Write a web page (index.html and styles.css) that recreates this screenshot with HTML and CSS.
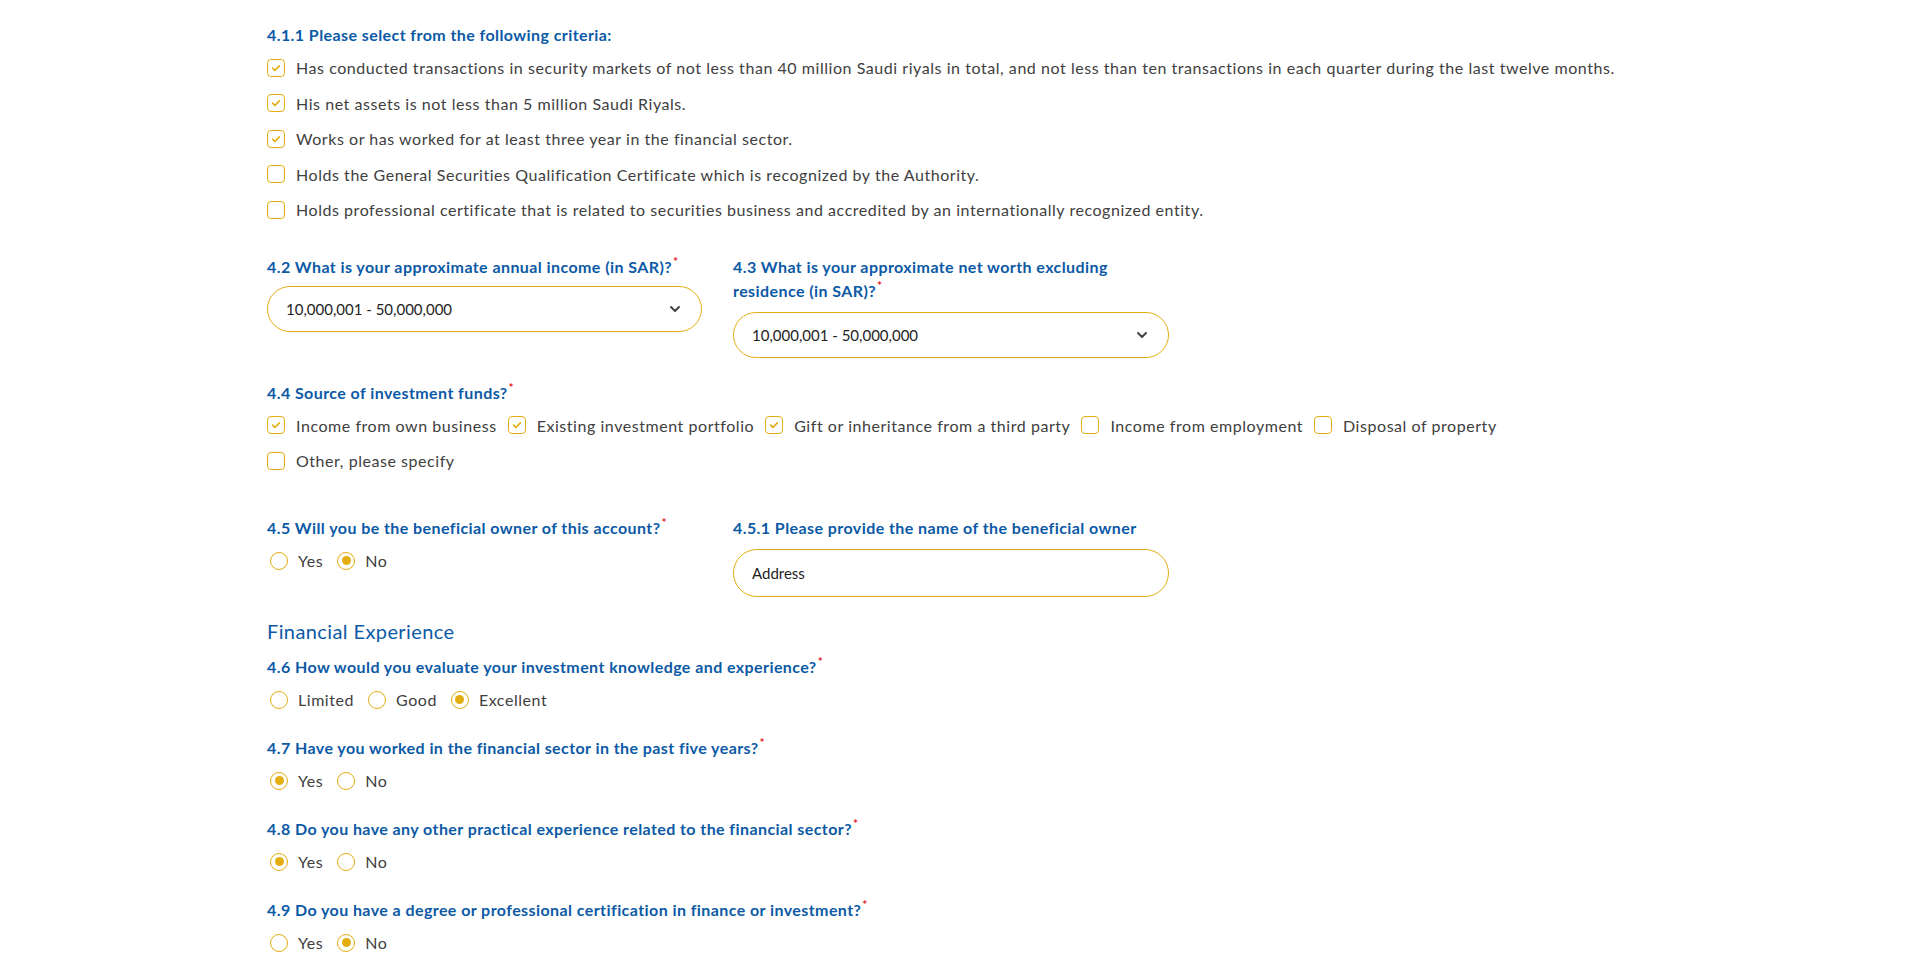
FILE: index.html
```html
<!DOCTYPE html>
<html lang="en">
<head>
<meta charset="utf-8">
<title>Investor Profile</title>
<link rel="stylesheet" href="styles.css">
</head>
<body>
<main class="form">
  <section class="criteria">
    <h3 class="q">4.1.1 Please select from the following criteria:</h3>
    <label class="opt row"><span class="cb on"><svg viewBox="0 0 18 18"><path d="M5.2 9.2l2.6 2.6 5-5.2"/></svg></span>Has conducted transactions in security markets of not less than 40 million Saudi riyals in total, and not less than ten transactions in each quarter during the last twelve months.</label>
    <label class="opt row"><span class="cb on"><svg viewBox="0 0 18 18"><path d="M5.2 9.2l2.6 2.6 5-5.2"/></svg></span>His net assets is not less than 5 million Saudi Riyals.</label>
    <label class="opt row"><span class="cb on"><svg viewBox="0 0 18 18"><path d="M5.2 9.2l2.6 2.6 5-5.2"/></svg></span>Works or has worked for at least three year in the financial sector.</label>
    <label class="opt row"><span class="cb"></span>Holds the General Securities Qualification Certificate which is recognized by the Authority.</label>
    <label class="opt row"><span class="cb"></span>Holds professional certificate that is related to securities business and accredited by an internationally recognized entity.</label>
  </section>

  <section class="pair selects">
    <div class="field">
      <h3 class="q">4.2 What is your approximate annual income (in SAR)?<sup>*</sup></h3>
      <div class="control select"><span>10,000,001 - 50,000,000</span><svg class="chev" viewBox="0 0 12 8"><path d="M2 2l4 4 4-4"/></svg></div>
    </div>
    <div class="field">
      <h3 class="q">4.3 What is your approximate net worth excluding<br>residence (in SAR)?<sup>*</sup></h3>
      <div class="control select"><span>10,000,001 - 50,000,000</span><svg class="chev" viewBox="0 0 12 8"><path d="M2 2l4 4 4-4"/></svg></div>
    </div>
  </section>

  <section class="funds">
    <h3 class="q">4.4 Source of investment funds?<sup>*</sup></h3>
    <div class="inline">
      <label class="opt"><span class="cb on"><svg viewBox="0 0 18 18"><path d="M5.2 9.2l2.6 2.6 5-5.2"/></svg></span>Income from own business</label>
      <label class="opt"><span class="cb on"><svg viewBox="0 0 18 18"><path d="M5.2 9.2l2.6 2.6 5-5.2"/></svg></span>Existing investment portfolio</label>
      <label class="opt"><span class="cb on"><svg viewBox="0 0 18 18"><path d="M5.2 9.2l2.6 2.6 5-5.2"/></svg></span>Gift or inheritance from a third party</label>
      <label class="opt"><span class="cb"></span>Income from employment</label>
      <label class="opt"><span class="cb"></span>Disposal of property</label>
    </div>
    <div class="inline">
      <label class="opt"><span class="cb"></span>Other, please specify</label>
    </div>
  </section>

  <section class="pair owner">
    <div class="field">
      <h3 class="q">4.5 Will you be the beneficial owner of this account?<sup>*</sup></h3>
      <div class="inline radios">
        <label class="opt"><span class="rd"></span>Yes</label>
        <label class="opt"><span class="rd on"></span>No</label>
      </div>
    </div>
    <div class="field">
      <h3 class="q">4.5.1 Please provide the name of the beneficial owner</h3>
      <div class="control text"><span>Address</span></div>
    </div>
  </section>

  <h2 class="section-title">Financial Experience</h2>

  <section class="question first">
    <h3 class="q">4.6 How would you evaluate your investment knowledge and experience?<sup>*</sup></h3>
    <div class="inline radios">
      <label class="opt"><span class="rd"></span>Limited</label>
      <label class="opt"><span class="rd"></span>Good</label>
      <label class="opt"><span class="rd on"></span>Excellent</label>
    </div>
  </section>

  <section class="question">
    <h3 class="q">4.7 Have you worked in the financial sector in the past five years?<sup>*</sup></h3>
    <div class="inline radios">
      <label class="opt"><span class="rd on"></span>Yes</label>
      <label class="opt"><span class="rd"></span>No</label>
    </div>
  </section>

  <section class="question">
    <h3 class="q">4.8 Do you have any other practical experience related to the financial sector?<sup>*</sup></h3>
    <div class="inline radios">
      <label class="opt"><span class="rd on"></span>Yes</label>
      <label class="opt"><span class="rd"></span>No</label>
    </div>
  </section>

  <section class="question">
    <h3 class="q">4.9 Do you have a degree or professional certification in finance or investment?<sup>*</sup></h3>
    <div class="inline radios">
      <label class="opt"><span class="rd"></span>Yes</label>
      <label class="opt"><span class="rd on"></span>No</label>
    </div>
  </section>
</main>
</body>
</html>
```

FILE: styles.css
```css
html, body {
  margin: 0;
  padding: 0;
  background: #ffffff;
}

body {
  font-family: "Lato", "Noto Sans", "Liberation Sans", sans-serif;
  font-size: 16px;
  color: #404040;
  overflow: hidden;
}

.form {
  padding: 23px 0 0 267px;
  display: flex;
  flex-direction: column;
}

.q {
  margin: 0;
  font-size: 16px;
  line-height: 24px;
  font-weight: 700;
  letter-spacing: 0.42px;
  color: #0c5aa6;
}

.q sup {
  color: #e5202a;
  font-size: 12px;
  line-height: 0;
  vertical-align: 7px;
  margin-left: 1px;
}

.criteria {
  display: flex;
  flex-direction: column;
}

.criteria .q {
  margin-bottom: 3px;
}

.opt {
  display: flex;
  align-items: center;
  height: 35.5px;
  white-space: nowrap;
  letter-spacing: 0.55px;
  color: #404040;
}

.cb {
  width: 16px;
  height: 16px;
  border: 1px solid #e2ae12;
  border-radius: 4px;
  margin-right: 11px;
  flex: none;
  display: flex;
  align-items: center;
  justify-content: center;
}

.cb svg {
  width: 16px;
  height: 16px;
}

.cb svg path {
  fill: none;
  stroke: #e2ae12;
  stroke-width: 1.9;
  stroke-linecap: round;
  stroke-linejoin: round;
}

.rd {
  width: 18px;
  height: 18px;
  box-sizing: border-box;
  border: 1px solid #e2ae12;
  border-radius: 50%;
  margin: 0 10px 0 3px;
  flex: none;
  display: flex;
  align-items: center;
  justify-content: center;
}

.rd.on::after {
  content: "";
  width: 9px;
  height: 9px;
  border-radius: 50%;
  background: #e2ae12;
}

.pair {
  display: grid;
  grid-template-columns: 435px 436px;
  column-gap: 31px;
  align-items: start;
}

.selects {
  margin-top: 27px;
}

.field .q {
  margin-bottom: 9px;
}

.selects .field:first-child .q {
  margin-bottom: 7px;
}

.control {
  height: 46px;
  box-sizing: border-box;
  border: 1px solid #e2ae12;
  border-radius: 24px;
  padding: 0 18px 0 18px;
  display: flex;
  align-items: center;
  justify-content: space-between;
  font-size: 15px;
  color: #1e1e1e;
}

.control.text {
  height: 48px;
}

.chev {
  width: 12px;
  height: 8px;
  margin-right: 2px;
}

.chev path {
  fill: none;
  stroke: #444;
  stroke-width: 2;
  stroke-linecap: round;
  stroke-linejoin: round;
}

.funds {
  margin-top: 23px;
}

.funds .q {
  margin-bottom: 3px;
}

.inline {
  display: flex;
  align-items: center;
  gap: 11px;
}

.inline.radios {
  gap: 11px;
}

.inline.radios .opt {
  height: 36px;
}

.owner {
  margin-top: 37px;
}

.owner .field:first-child .q {
  margin-bottom: 3px;
}

.section-title {
  margin: 20px 0 0;
  font-size: 20px;
  line-height: 28px;
  font-weight: 400;
  letter-spacing: 0.4px;
  color: #0c5aa6;
}

.question {
  margin-top: 18px;
}

.question.first {
  margin-top: 10px;
}

.question .q {
  margin-bottom: 3px;
}
```
